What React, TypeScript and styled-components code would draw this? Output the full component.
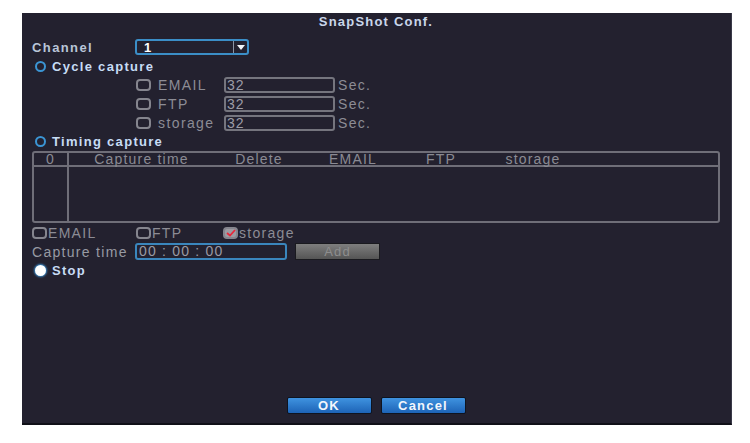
import styled, { createGlobalStyle } from "styled-components";

const GlobalStyle = createGlobalStyle`
  html, body {
    margin: 0;
    padding: 0;
    background: #ffffff;
  }
  body {
    font-family: "Liberation Sans", Arial, sans-serif;
  }
`;

function App() {
  return (
    <>
      <GlobalStyle />
      <StyledPanel>
        <StyledTitle>SnapShot Conf.</StyledTitle>

        <StyledRow $h={20} $mt={8}>
          <StyledFieldLabel $bright>Channel</StyledFieldLabel>
          <StyledSelect>
            <span>1</span>
            <StyledArrow>
              <svg width="8" height="5" viewBox="0 0 8 5">
                <path d="M0 0 L8 0 L4 5 Z" fill="#f2f4f8" />
              </svg>
            </StyledArrow>
          </StyledSelect>
        </StyledRow>

        <StyledRow $h={18}>
          <StyledRadio />
          <StyledRadioLabel>Cycle capture</StyledRadioLabel>
        </StyledRow>

        {["EMAIL", "FTP", "storage"].map((name) => (
          <StyledRow $h={19} key={name}>
            <StyledSubIndent />
            <StyledCheck />
            <StyledCheckLabel>{name}</StyledCheckLabel>
            <StyledInput>32</StyledInput>
            <StyledUnit>Sec.</StyledUnit>
          </StyledRow>
        ))}

        <StyledRow $h={19}>
          <StyledRadio />
          <StyledRadioLabel>Timing capture</StyledRadioLabel>
        </StyledRow>

        <StyledTable>
          <StyledHead $first>0</StyledHead>
          <StyledHead>Capture time</StyledHead>
          <StyledHead>Delete</StyledHead>
          <StyledHead>EMAIL</StyledHead>
          <StyledHead>FTP</StyledHead>
          <StyledHead>storage</StyledHead>
          <StyledHead />
          <StyledBodyCell $first />
          <StyledBodyCell $span />
        </StyledTable>

        <StyledRow $h={18} $mt={1}>
          <StyledOption $w={104}>
            <StyledCheck />
            EMAIL
          </StyledOption>
          <StyledOption $w={87}>
            <StyledCheck />
            FTP
          </StyledOption>
          <StyledOption>
            <StyledCheck $checked>
              <svg width="10" height="8" viewBox="0 0 10 8">
                <path
                  d="M1 4 L4 6.5 L9 1"
                  stroke="#e8283c"
                  strokeWidth="1.8"
                  fill="none"
                />
              </svg>
            </StyledCheck>
            storage
          </StyledOption>
        </StyledRow>

        <StyledRow $h={19}>
          <StyledFieldLabel>Capture time</StyledFieldLabel>
          <StyledTimeInput>00 : 00 : 00</StyledTimeInput>
          <StyledAddButton>Add</StyledAddButton>
        </StyledRow>

        <StyledRow $h={19}>
          <StyledRadio $on />
          <StyledRadioLabel>Stop</StyledRadioLabel>
        </StyledRow>

        <StyledFooter>
          <StyledButton>OK</StyledButton>
          <StyledButton>Cancel</StyledButton>
        </StyledFooter>
      </StyledPanel>
    </>
  );
}

export default App;

const StyledPanel = styled.div`
  box-sizing: border-box;
  margin: 13px 0 0 22px;
  width: 710px;
  height: 412px;
  background: #23212f;
  border-right: 1px solid #3a3948;
  border-bottom: 2px solid #101018;
  padding: 0 11px 0 10px;
  display: flex;
  flex-direction: column;
`;

const StyledTitle = styled.div`
  height: 15px;
  line-height: 15px;
  text-align: center;
  font-size: 13px;
  font-weight: bold;
  letter-spacing: 1.2px;
  color: #c9d6ea;
  margin-top: 1px;
`;

const StyledRow = styled.div<{ $h: number; $mt?: number }>`
  display: flex;
  align-items: center;
  height: ${(p) => p.$h}px;
  margin-top: ${(p) => p.$mt || 0}px;
  flex-shrink: 0;
`;

const StyledFieldLabel = styled.div<{ $bright?: boolean }>`
  width: 103px;
  font-size: ${(p) => (p.$bright ? 13 : 14)}px;
  font-weight: ${(p) => (p.$bright ? "bold" : "normal")};
  letter-spacing: ${(p) => (p.$bright ? 1.4 : 1.3)}px;
  color: ${(p) => (p.$bright ? "#b9c5d8" : "#979aa3")};
  white-space: nowrap;
`;

const StyledSelect = styled.div`
  box-sizing: border-box;
  width: 114px;
  height: 16px;
  border: 2px solid #3b8ec7;
  border-radius: 3px;
  display: flex;
  align-items: center;
  justify-content: space-between;
  padding-left: 7px;
  font-size: 13px;
  font-weight: bold;
  color: #ffffff;
`;

const StyledArrow = styled.div`
  width: 13px;
  height: 100%;
  border-left: 1px solid #8b94a4;
  display: flex;
  align-items: center;
  justify-content: center;
`;

const StyledRadio = styled.div<{ $on?: boolean }>`
  box-sizing: border-box;
  width: 11px;
  height: 11px;
  margin-left: 3px;
  margin-right: 6px;
  border-radius: 50%;
  border: 2px solid ${(p) => (p.$on ? "#ffffff" : "#3b95d4")};
  background: ${(p) => (p.$on ? "#ffffff" : "transparent")};
  box-shadow: ${(p) => (p.$on ? "0 0 2px 1px #3b8fd0" : "none")};
`;

const StyledRadioLabel = styled.div`
  font-size: 13px;
  font-weight: bold;
  letter-spacing: 1.3px;
  color: #c7dcf5;
`;

const StyledSubIndent = styled.div`
  width: 104px;
`;

const StyledCheck = styled.div<{ $checked?: boolean }>`
  box-sizing: border-box;
  width: 15px;
  height: 12px;
  margin-right: 1px;
  border: 2px solid #85858e;
  border-radius: 4px;
  background: ${(p) => (p.$checked ? "#9c9ca3" : "transparent")};
  display: flex;
  align-items: center;
  justify-content: center;
  flex-shrink: 0;
`;

const StyledCheckLabel = styled.div`
  width: 66px;
  margin-left: 6px;
  font-size: 14px;
  letter-spacing: 1.4px;
  color: #8c8c95;
`;

const StyledInput = styled.div`
  box-sizing: border-box;
  width: 111px;
  height: 16px;
  border: 2px solid #75757e;
  border-radius: 3px;
  padding-left: 1px;
  line-height: 12px;
  font-size: 14px;
  letter-spacing: 1px;
  color: #9c9ca6;
`;

const StyledUnit = styled.div`
  margin-left: 3px;
  font-size: 14px;
  letter-spacing: 1.3px;
  color: #8c8c95;
`;

const StyledTable = styled.div`
  box-sizing: border-box;
  height: 72px;
  width: 688px;
  flex-shrink: 0;
  border: 2px solid #6f6e78;
  border-radius: 3px;
  display: grid;
  grid-template-columns: 35px 145px 90px 98px 78px 106px 1fr;
  grid-template-rows: 14px 1fr;
`;

const StyledHead = styled.div<{ $first?: boolean }>`
  border-bottom: 2px solid #6f6e78;
  border-right: ${(p) => (p.$first ? "2px solid #6f6e78" : "none")};
  font-size: 14px;
  letter-spacing: 1.2px;
  line-height: 13px;
  text-align: center;
  color: #8a8a93;
  white-space: nowrap;
`;

const StyledBodyCell = styled.div<{ $first?: boolean; $span?: boolean }>`
  border-right: ${(p) => (p.$first ? "2px solid #6f6e78" : "none")};
  grid-column: ${(p) => (p.$span ? "2 / -1" : "auto")};
`;

const StyledOption = styled.div<{ $w?: number }>`
  display: flex;
  align-items: center;
  width: ${(p) => (p.$w ? `${p.$w}px` : "auto")};
  font-size: 14px;
  letter-spacing: 1.3px;
  color: #8c8c95;
`;

const StyledTimeInput = styled.div`
  box-sizing: border-box;
  width: 152px;
  height: 17px;
  border: 2px solid #3a86bd;
  border-radius: 3px;
  padding-left: 2px;
  line-height: 13px;
  font-size: 14px;
  letter-spacing: 1.2px;
  color: #9a9aa4;
  white-space: pre;
`;

const StyledAddButton = styled.div`
  box-sizing: border-box;
  width: 85px;
  height: 17px;
  margin-left: 8px;
  border: 1px solid #1a1a1f;
  background: linear-gradient(#7e7e7e, #555555);
  text-align: center;
  line-height: 15px;
  font-size: 13px;
  letter-spacing: 1.2px;
  color: #8e8e8e;
`;

const StyledFooter = styled.div`
  margin-top: auto;
  margin-bottom: 9px;
  display: flex;
  justify-content: center;
  gap: 9px;
`;

const StyledButton = styled.div`
  box-sizing: border-box;
  width: 85px;
  height: 17px;
  border: 1px solid #0e1420;
  border-radius: 2px;
  background: linear-gradient(#3f93e0, #1d63b6);
  text-align: center;
  line-height: 15px;
  font-size: 13px;
  font-weight: bold;
  letter-spacing: 1.2px;
  color: #f2f6fc;
`;
